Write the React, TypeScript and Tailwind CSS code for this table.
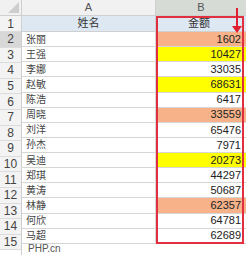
import React from "react";

type Row = {
  name: string;
  amount: number;
  fill?: "salmon" | "yellow";
};

const rows: Row[] = [
  { name: "张丽", amount: 1602, fill: "salmon" },
  { name: "王强", amount: 10427, fill: "yellow" },
  { name: "李娜", amount: 33035 },
  { name: "赵敏", amount: 68631, fill: "yellow" },
  { name: "陈浩", amount: 6417 },
  { name: "周晓", amount: 33559, fill: "salmon" },
  { name: "刘洋", amount: 65476 },
  { name: "孙杰", amount: 7971 },
  { name: "吴迪", amount: 20273, fill: "yellow" },
  { name: "郑琪", amount: 44297 },
  { name: "黄涛", amount: 50687 },
  { name: "林静", amount: 62357, fill: "salmon" },
  { name: "何欣", amount: 64781 },
  { name: "马超", amount: 62689 },
];

const fillClass = (fill?: Row["fill"]) =>
  fill === "salmon" ? "bg-[#f7b28a]" : fill === "yellow" ? "bg-[#ffff00]" : "bg-white";

export default function App() {
  return (
    <div className="relative w-[246px] h-[256px] overflow-hidden bg-white font-['Liberation_Sans','Noto_Sans_CJK_SC',sans-serif] text-[#333]">
      {/* column headers */}
      <div className="flex h-[16px] border-b border-[#cfcfcf] bg-[#f1f1f1] text-[11px] text-[#555]">
        <div className="relative w-[22px] border-r border-[#cfcfcf]">
          <div className="absolute right-[2px] bottom-[2px] w-0 h-0 border-l-[11px] border-l-transparent border-b-[11px] border-b-[#cdcdcd]" />
        </div>
        <div className="w-[134px] flex items-center justify-center border-r border-[#cfcfcf]">A</div>
        <div className="flex-1 flex items-center justify-center bg-[#d6dbd6]">B</div>
      </div>

      <div className="flex">
        {/* row numbers */}
        <div className="w-[22px] flex flex-col border-r border-[#cfcfcf] text-[12px] text-[#444]">
          {Array.from({ length: 15 }, (_, i) => (
            <div
              key={i}
              className={`flex items-center justify-center border-b border-[#dcdcdc] ${
                i === 0 ? "h-[16px]" : "h-[15.6px]"
              } ${i === 1 ? "bg-[#d8d8d8]" : "bg-[#f3f3f3]"}`}
            >
              {i + 1}
            </div>
          ))}
        </div>

        {/* cells */}
        <div className="flex-1 flex flex-col">
          <div className="flex h-[16px] bg-[#dde8f3] border-b border-[#d0d0d0] text-[11px] text-[#333]">
            <div className="w-[134px] flex items-center justify-center border-r border-[#d0d0d0]">姓名</div>
            <div className="flex-1 flex items-center justify-center pr-[4px]">金额</div>
          </div>
          {rows.map((r) => (
            <div key={r.name} className="flex h-[15.14px] border-b border-[#d6d6d6]">
              <div className="w-[134px] flex items-center pl-[4px] text-[10px] text-[#444] border-r border-[#d6d6d6]">
                {r.name}
              </div>
              <div
                className={`flex-1 flex items-center justify-end pr-[5px] text-[11px] text-[#222] ${fillClass(r.fill)}`}
              >
                {r.amount}
              </div>
            </div>
          ))}
          <div className="-mt-[1px] pl-[6px] text-[10px] leading-[12px] text-[#555]">PHP.cn</div>
        </div>
      </div>

      {/* highlight box over column B */}
      <div className="absolute left-[156px] top-[16px] w-[88px] h-[228px] border-2 border-[#e03040]" />

      {/* arrow */}
      <svg className="absolute left-[231px] top-[8px]" width="12" height="26" viewBox="0 0 12 26">
        <line x1="6" y1="0" x2="6" y2="20" stroke="#e02030" strokeWidth="2" />
        <path d="M1 18 L6 25 L11 18 Z" fill="#e02030" />
      </svg>
    </div>
  );
}
